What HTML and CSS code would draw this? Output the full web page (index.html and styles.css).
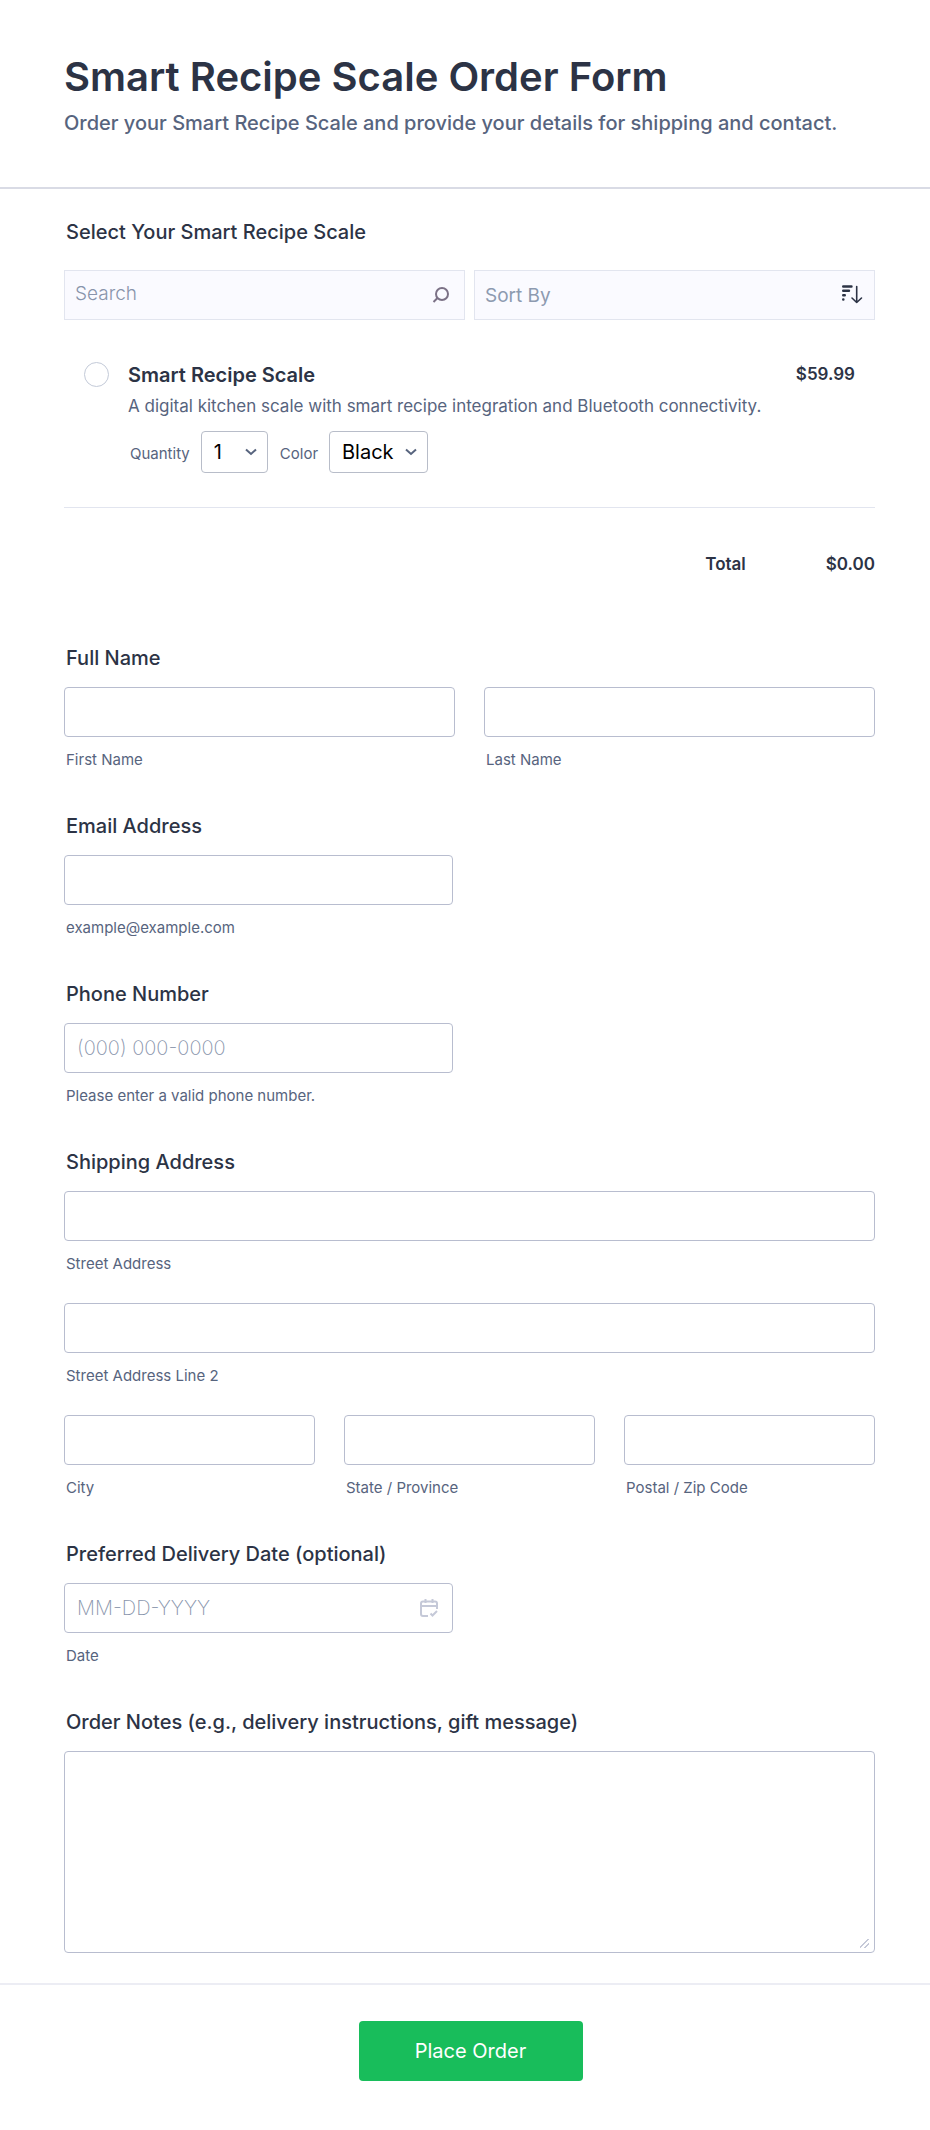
FILE: index.html
```html
<!DOCTYPE html>
<html lang="en">
<head>
    <meta charset="UTF-8">
    <meta name="viewport" content="width=device-width, initial-scale=1.0">
    <title>Smart Recipe Scale Order Form</title>
    <link rel="stylesheet" href="styles.css">
</head>
<body>
    <form class="order-form">
        <header class="form-header">
            <h1>Smart Recipe Scale Order Form</h1>
            <p>Order your Smart Recipe Scale and provide your details for shipping and contact.</p>
        </header>

        <main class="form-body">
            <section class="products">
                <h2 class="label">Select Your Smart Recipe Scale</h2>
                <div class="product-tools">
                    <div class="control">
                        <input type="text" class="tool search" placeholder="Search" aria-label="Search">
                        <svg class="icon icon-search" viewBox="0 0 18 18" fill="none" stroke="#7b7186" stroke-width="2">
                            <circle cx="10" cy="8" r="6"/>
                            <path d="M5.5 12 1.5 16"/>
                        </svg>
                    </div>
                    <div class="control">
                        <select class="tool sort" aria-label="Sort By">
                            <option>Sort By</option>
                        </select>
                        <svg class="icon icon-sort" viewBox="0 0 22 20" fill="none" stroke="#2c3345" stroke-linecap="round">
                            <path stroke-width="2.4" d="M2.200 1.500H10.500M2.200 5.700H8M2.200 10.200H3.800M2.200 14.500H2.400"/>
                            <path stroke-width="1.6" stroke-linejoin="round" d="M15.700 1.500V17.500M11 13 15.700 17.500 20.500 13"/>
                        </svg>
                    </div>
                </div>

                <div class="product">
                    <input type="radio" id="scale" name="product" class="radio">
                    <div class="product-info">
                        <label for="scale" class="product-name">Smart Recipe Scale</label>
                        <p class="product-desc">A digital kitchen scale with smart recipe integration and Bluetooth connectivity.</p>
                        <div class="product-options">
                            <label for="quantity">Quantity</label>
                            <div class="control quantity">
                                <select id="quantity">
                                    <option>1</option>
                                    <option>2</option>
                                    <option>3</option>
                                </select>
                                <svg class="chevron" viewBox="0 0 12 8" fill="none" stroke="#57647e" stroke-width="2"><path d="M1 1.500 6 6 11 1.500"/></svg>
                            </div>
                            <label for="color">Color</label>
                            <div class="control color">
                                <select id="color">
                                    <option>Black</option>
                                    <option>White</option>
                                </select>
                                <svg class="chevron" viewBox="0 0 12 8" fill="none" stroke="#57647e" stroke-width="2"><path d="M1 1.500 6 6 11 1.500"/></svg>
                            </div>
                        </div>
                    </div>
                    <span class="price">$59.99</span>
                </div>

                <div class="total">
                    <span>Total</span>
                    <span>$0.00</span>
                </div>
            </section>

            <fieldset class="field">
                <legend class="label">Full Name</legend>
                <div class="row">
                    <div class="cell">
                        <input type="text" id="first" class="input">
                        <label for="first" class="sub-label">First Name</label>
                    </div>
                    <div class="cell">
                        <input type="text" id="last" class="input">
                        <label for="last" class="sub-label">Last Name</label>
                    </div>
                </div>
            </fieldset>

            <div class="field">
                <label for="email" class="label">Email Address</label>
                <div class="cell half">
                    <input type="email" id="email" class="input">
                    <label for="email" class="sub-label">example@example.com</label>
                </div>
            </div>

            <div class="field">
                <label for="phone" class="label">Phone Number</label>
                <div class="cell half">
                    <input type="tel" id="phone" class="input" placeholder="(000) 000-0000">
                    <label for="phone" class="sub-label">Please enter a valid phone number.</label>
                </div>
            </div>

            <fieldset class="field">
                <legend class="label">Shipping Address</legend>
                <div class="address">
                    <div class="cell">
                        <input type="text" id="street" class="input">
                        <label for="street" class="sub-label">Street Address</label>
                    </div>
                    <div class="cell">
                        <input type="text" id="street2" class="input">
                        <label for="street2" class="sub-label">Street Address Line 2</label>
                    </div>
                    <div class="row">
                        <div class="cell">
                            <input type="text" id="city" class="input">
                            <label for="city" class="sub-label">City</label>
                        </div>
                        <div class="cell">
                            <input type="text" id="state" class="input">
                            <label for="state" class="sub-label">State / Province</label>
                        </div>
                        <div class="cell">
                            <input type="text" id="zip" class="input">
                            <label for="zip" class="sub-label">Postal / Zip Code</label>
                        </div>
                    </div>
                </div>
            </fieldset>

            <div class="field">
                <label for="date" class="label">Preferred Delivery Date (optional)</label>
                <div class="cell half">
                    <div class="control">
                        <input type="text" id="date" class="input" placeholder="MM-DD-YYYY">
                        <svg class="icon icon-date" viewBox="0 0 18 20" fill="none" stroke="#c5c9d8" stroke-width="2">
                            <path d="M17 11V5.500Q17 3.500 15 3.500H3Q1 3.500 1 5.500V16Q1 18 3 18H8M1 8H17M5.500 1V5M12.500 1V5"/>
                            <path d="M10.500 15.500 12.500 17.500 17 13"/>
                        </svg>
                    </div>
                    <label for="date" class="sub-label">Date</label>
                </div>
            </div>

            <div class="field">
                <label for="notes" class="label">Order Notes (e.g., delivery instructions, gift message)</label>
                <textarea id="notes" class="input notes"></textarea>
            </div>
        </main>

        <footer class="form-footer">
            <button type="submit" class="submit">Place Order</button>
        </footer>
    </form>
</body>
</html>
```
FILE: styles.css
```css
* {
    box-sizing: border-box;
}
body {
    margin: 0;
    font-family: Inter, sans-serif;
    font-size: 20px;
    line-height: 24px;
    color: #2c3345;
    background-color: #fff;
}
h1, h2, p {
    margin: 0;
}
input, select, textarea, button {
    font: inherit;
}
.form-header {
    padding: 53px 55px 52px 64px;
    border-bottom: 2px solid #d9dbe5;
}
.form-header h1 {
    font-size: 40px;
    line-height: 48px;
    font-weight: 600;
}
.form-header p {
    margin-top: 10px;
    font-weight: 500;
    color: #57647e;
}
.form-body {
    padding: 31px 55px 30px 64px;
}
.label {
    display: block;
    margin: 0 0 17px;
    padding: 0 2px;
    font-size: 20px;
    font-weight: 500;
}
.products {
    margin-bottom: 70px;
}
.products .label {
    margin-bottom: 26px;
}
.product-tools {
    display: grid;
    grid-template-columns: 1fr 1fr;
    gap: 9px;
}
.control {
    position: relative;
}
.tool {
    display: block;
    width: 100%;
    height: 50px;
    padding: 0 10px;
    border: 1px solid #e2e5ef;
    border-radius: 0;
    background-color: #fafaff;
    color: #8d9ab0;
    font-size: 19px;
    appearance: none;
}
.search {
    padding-bottom: 4px;
}
.sort {
    padding-top: 2px;
}
::placeholder {
    color: #8894ab;
    font-weight: 200;
    opacity: 1;
}
.search::placeholder {
    font-weight: 300;
}
.icon {
    position: absolute;
    top: 50%;
    transform: translateY(-50%);
    pointer-events: none;
}
.icon-search {
    right: 15px;
    width: 18px;
}
.icon-sort {
    right: 12px;
    width: 22px;
}
.icon-date {
    right: 15px;
    width: 18px;
}
.product {
    display: flex;
    align-items: flex-start;
    padding: 42px 20px 34px;
    border-bottom: 1px solid #e2e5ef;
}
.radio {
    appearance: none;
    flex: none;
    width: 25px;
    height: 25px;
    margin: 0 19px 0 0;
    border: 1px solid #c3cad8;
    border-radius: 50%;
}
.radio:checked {
    border: 8px solid #2e69ff;
}
.product-info {
    flex: 1;
    padding-top: 1px;
}
.product-name {
    font-weight: 600;
}
.product-desc {
    margin-top: 7px;
    font-size: 17px;
    color: #57647e;
}
.product-options {
    display: flex;
    align-items: center;
    margin-top: 13px;
    padding-left: 2px;
}
.product-options label {
    padding-top: 4px;
    font-size: 15px;
    color: #57647e;
}
.product-options select {
    display: block;
    width: 100%;
    height: 42px;
    padding: 0 12px;
    border: 1px solid #b8bdc9;
    border-radius: 4px;
    background-color: #fff;
    color: #000;
    appearance: none;
}
.quantity {
    width: 67px;
    margin: 0 12px 0 11px;
}
.color {
    width: 99px;
    margin-left: 11px;
}
.chevron {
    position: absolute;
    top: 17px;
    right: 11px;
    width: 12px;
    pointer-events: none;
}
.price {
    font-size: 17px;
    font-weight: 600;
}
.total {
    display: flex;
    justify-content: flex-end;
    gap: 80px;
    padding-top: 44px;
    font-size: 17px;
    font-weight: 600;
}
.field {
    margin: 0 0 44px;
    padding: 0;
    border: 0;
    min-width: 0;
}
.field:last-child {
    margin-bottom: 0;
}
.row {
    display: flex;
    gap: 29px;
}
.cell {
    flex: 1;
    min-width: 0;
}
.half {
    width: 48%;
}
.address {
    display: grid;
    gap: 29px;
}
.input {
    display: block;
    width: 100%;
    height: 50px;
    padding: 0 12px;
    border: 1px solid #b8bdcf;
    border-radius: 4px;
    background-color: #fff;
    color: #2c3345;
}
.sub-label {
    display: block;
    margin-top: 13px;
    padding: 0 2px;
    font-size: 15px;
    line-height: 20px;
    color: #57647e;
}
.notes {
    height: 202px;
    padding: 12px;
    resize: vertical;
}
.notes::-webkit-resizer {
    background: linear-gradient(135deg, transparent 44%, #c5c9d8 44% 54%, transparent 54% 68%, #c5c9d8 68% 78%, transparent 78%) 1px 2px / 9px 9px no-repeat;
}
.form-footer {
    padding: 36px 53px 50px 64px;
    border-top: 2px solid #ecedf4;
    text-align: center;
}
.submit {
    height: 60px;
    min-width: 224px;
    border: 0;
    border-radius: 4px;
    background-color: #18bd5b;
    color: #fff;
    cursor: pointer;
}
```
